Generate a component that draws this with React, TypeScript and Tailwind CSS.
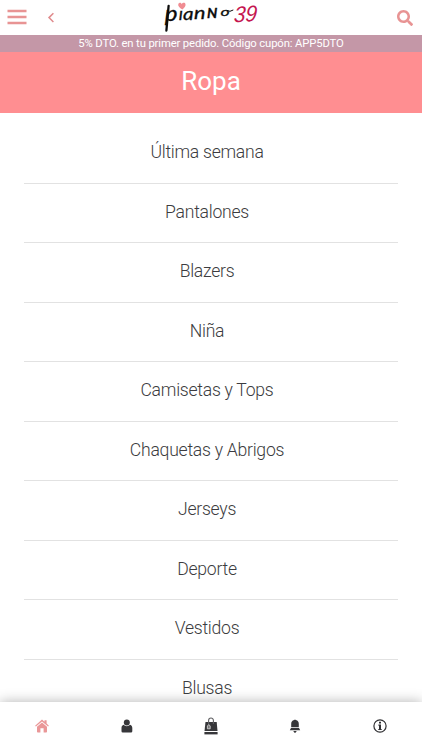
import { FaSearch } from 'react-icons/fa'

const categories = [
  'Última semana',
  'Pantalones',
  'Blazers',
  'Niña',
  'Camisetas y Tops',
  'Chaquetas y Abrigos',
  'Jerseys',
  'Deporte',
  'Vestidos',
  'Blusas',
]

function Logo() {
  return (
    <svg width="98" height="35" viewBox="0 0 98 35" fontFamily="Lato, sans-serif">
      <g fill="#0c0c0c" stroke="#0c0c0c" strokeWidth=".3" fontStyle="italic">
        <text transform="translate(1.8 20.5) scale(1.15 1)" fontSize="21">p</text>
        <text transform="translate(15.8 20)" fontSize="18">ı</text>
        <text transform="translate(20 19.5) scale(1.15 1)" fontSize="18">a</text>
        <text transform="translate(31 19) scale(1.2 1)" fontSize="18">n</text>
        <text transform="translate(44 18) scale(1.1 1)" fontSize="13" fontWeight="700">N</text>
        <text transform="translate(57.5 16.3) scale(1.35 .95)" fontSize="13">o</text>
      </g>
      {/* long stem of the p and the tail of the o */}
      <path d="M5.6 6 3.4 30.5" stroke="#0c0c0c" strokeWidth="2.3" strokeLinecap="round" />
      <path d="M64 10.5q3 2 6-.3" fill="none" stroke="#0c0c0c" strokeWidth="1" strokeLinecap="round" />
      <text
        transform="translate(70.5 22.5) rotate(-4) skewX(-8) scale(.93 1)"
        fontFamily="'Liberation Sans', sans-serif"
        fontSize="22.5"
        fontStyle="italic"
        fill="#c5164f"
      >
        39
      </text>
      <path d="M19.4 9.5C16.4 7.8 14.7 5.9 15.3 4c.7-1.7 2.9-1.5 3.4.2.9-1.8 3.4-1.9 3.8 0 .4 1.9-1.2 3.8-3.1 5.3z" fill="#f08c92" />
    </svg>
  )
}

function HomeIcon() {
  return (
    <svg width="14" height="14" viewBox="0 0 14 14" fill="#ea9798">
      <path d="M.1 6.7 7 .6l2.5 2.2V1.2h2.1v3.4l2.3 2.1-.8.9L7 2.4.9 7.6z" />
      <path d="M2 7.7 7 3.5l5 4.2v5q0 .8-.8.8H8.6V9.3H5.4v4.2H2.8q-.8 0-.8-.8z" />
    </svg>
  )
}

function UserIcon() {
  return (
    <svg width="12" height="14" viewBox="0 0 12 14" fill="#37373a">
      <circle cx="5.8" cy="3.5" r="3" />
      <path d="M2.7 5.8C3.9 7.7 7.7 7.7 9 5.8c1.6.5 2.3 1.7 2.3 3.3v3.1q0 1.3-1.3 1.3H1.8Q.5 13.5.5 12.2V9.1c0-1.7.7-2.9 2.2-3.3z" />
    </svg>
  )
}

function BagIcon() {
  return (
    <svg width="14" height="18" viewBox="0 0 14 18">
      <path d="M1.5 5h11.2l.8 9H.5z" fill="#37373a" />
      <path d="M.4 15h13.2v2.4H.4z" fill="#37373a" />
      <path d="M4.6 8V3.6C4.6.2 9.4.2 9.4 3.6V7" fill="none" stroke="#606063" strokeWidth="1.1" />
      <path d="m3.4 9 1.4-1.4L6.2 9v2.8H3.4z" fill="#777" stroke="#ddd" strokeWidth=".8" />
    </svg>
  )
}

function BellIcon() {
  return (
    <svg width="12" height="15" viewBox="0 0 12 15" fill="#37373a">
      <path d="M5.2 1.1q.8-1 1.6 0C9 1.6 9.8 3.2 9.8 5v3.3H2.2V5c0-1.8.8-3.4 3-3.9z" />
      <path d="M2 9h8l1.2 2.2H.8zM4.3 12.1h3.4Q7 13.9 6 13.9t-1.7-1.8z" />
    </svg>
  )
}

function InfoIcon() {
  return (
    <svg width="14" height="14" viewBox="0 0 14 14" fill="#303033">
      <circle cx="7" cy="7" r="6.1" fill="none" stroke="#303033" strokeWidth="1.2" />
      <path d="M6 2.8h2v1.8H6zM5.4 5.6H8v4.3h.7V11H5.3V9.9H6V6.7h-.6z" />
    </svg>
  )
}

const tabs = [HomeIcon, UserIcon, BagIcon, BellIcon, InfoIcon]

export default function App() {
  return (
    <div className="flex h-[750px] w-full flex-col overflow-hidden bg-white font-['Roboto',sans-serif]">
      <header className="flex h-[35px] shrink-0 items-center">
        <div className="flex w-[163px] items-center pl-[7px]">
          <button aria-label="Menú">
            <svg width="20" height="18" viewBox="0 0 20 18" fill="#e89494">
              <path d="M.5 .7h19v2.5H.5zM.5 6.7h19v2.5H.5zM.5 12.8h19v2.5H.5z" />
            </svg>
          </button>
          <button aria-label="Volver" className="ml-[20px]">
            <svg width="8" height="12" viewBox="0 0 8 12" fill="none" stroke="#e08b8d" strokeWidth="1.5">
              <path d="M6.4 1.2 2 5.6 6.4 10" />
            </svg>
          </button>
        </div>
        <Logo />
        <button aria-label="Buscar" className="mr-[9px] ml-auto">
          <FaSearch size={16} color="#e89494" />
        </button>
      </header>

      <div className="flex h-[17px] shrink-0 items-center justify-center bg-[#c497a7] pt-px text-[11.3px] tracking-[-0.14px] text-white">
        5% DTO. en tu primer pedido. Código cupón: APP5DTO
      </div>
      <h1 className="flex h-[61px] shrink-0 items-center justify-center bg-[#ff8e91] pb-[2px] text-[26px] text-white">
        Ropa
      </h1>

      <ul className="min-h-0 flex-1 overflow-hidden px-6 pt-[11px]">
        {categories.map(name => (
          <li
            key={name}
            className="flex h-[59.5px] items-center justify-center border-b border-[#e2e2e2] pr-2 pb-[2px] text-[17.6px] font-light tracking-[-0.26px] text-[#3c3c40]"
          >
            {name}
          </li>
        ))}
      </ul>

      <nav className="relative flex h-12 shrink-0 items-center bg-white shadow-[0_0_12px_rgba(0,0,0,0.3)]">
        {tabs.map((Icon, i) => (
          <button key={i} className="flex flex-1 items-center justify-center">
            <Icon />
          </button>
        ))}
      </nav>
    </div>
  )
}
